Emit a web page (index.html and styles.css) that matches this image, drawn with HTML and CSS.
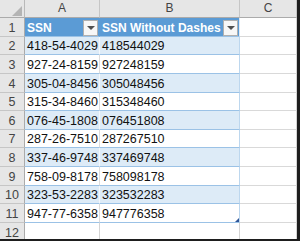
FILE: index.html
```html
<!DOCTYPE html>
<html>
<head>
<meta charset="utf-8">
<link rel="stylesheet" href="styles.css">
</head>
<body>
<div class="sheet">
  <div class="grid">
    <div class="corner"><span class="corner-tri"></span></div>
    <div class="colhead">A</div>
    <div class="colhead">B</div>
    <div class="colhead">C</div>

    <div class="rowhead">1</div>
    <div class="cell th a">SSN<span class="filter"><span class="arrow"></span></span></div>
    <div class="cell th b">SSN Without Dashes<span class="filter"><span class="arrow"></span></span></div>
    <div class="cell c"></div>

    <div class="rowhead">2</div>
    <div class="cell band a">418-54-4029</div>
    <div class="cell band b">418544029</div>
    <div class="cell c"></div>

    <div class="rowhead">3</div>
    <div class="cell plain a">927-24-8159</div>
    <div class="cell plain b">927248159</div>
    <div class="cell c"></div>

    <div class="rowhead">4</div>
    <div class="cell band a">305-04-8456</div>
    <div class="cell band b">305048456</div>
    <div class="cell c"></div>

    <div class="rowhead">5</div>
    <div class="cell plain a">315-34-8460</div>
    <div class="cell plain b">315348460</div>
    <div class="cell c"></div>

    <div class="rowhead">6</div>
    <div class="cell band a">076-45-1808</div>
    <div class="cell band b">076451808</div>
    <div class="cell c"></div>

    <div class="rowhead">7</div>
    <div class="cell plain a">287-26-7510</div>
    <div class="cell plain b">287267510</div>
    <div class="cell c"></div>

    <div class="rowhead">8</div>
    <div class="cell band a">337-46-9748</div>
    <div class="cell band b">337469748</div>
    <div class="cell c"></div>

    <div class="rowhead">9</div>
    <div class="cell plain a">758-09-8178</div>
    <div class="cell plain b">758098178</div>
    <div class="cell c"></div>

    <div class="rowhead">10</div>
    <div class="cell band a">323-53-2283</div>
    <div class="cell band b">323532283</div>
    <div class="cell c"></div>

    <div class="rowhead">11</div>
    <div class="cell plain a">947-77-6358</div>
    <div class="cell plain b last">947776358<span class="resize"></span></div>
    <div class="cell c"></div>

    <div class="rowhead">12</div>
    <div class="cell empty"></div>
    <div class="cell empty"></div>
    <div class="cell c"></div>
  </div>
</div>
</body>
</html>
```

FILE: styles.css
```css
html, body {
  margin: 0;
  padding: 0;
  background: #ffffff;
}

.sheet {
  width: 297px;
  height: 239px;
  border-right: 3px solid #1e1e1e;
  border-bottom: 2px solid #1e1e1e;
  overflow: hidden;
  font-family: "Liberation Sans", Arial, sans-serif;
}

.grid {
  display: grid;
  grid-template-columns: 25px 75px 140px 57px;
  grid-template-rows: 18px repeat(12, 18.64px);
}

.corner {
  position: relative;
  background: #e6e6e6;
  border-right: 1px solid #b9b9b9;
  border-bottom: 1px solid #ababab;
}

.corner-tri {
  position: absolute;
  right: 2px;
  bottom: 1px;
  width: 0;
  height: 0;
  border-left: 10px solid transparent;
  border-bottom: 10px solid #b4b4b4;
}

.colhead {
  background: #e6e6e6;
  border-right: 1px solid #c6c6c6;
  border-bottom: 1px solid #ababab;
  color: #444444;
  font-size: 12px;
  display: flex;
  align-items: flex-end;
  justify-content: center;
  padding-bottom: 2px;
}

.rowhead {
  background: #e6e6e6;
  border-right: 1px solid #ababab;
  border-bottom: 1px solid #c6c6c6;
  color: #444444;
  font-size: 12.5px;
  display: flex;
  align-items: flex-end;
  justify-content: center;
  line-height: 15px;
}

.cell {
  position: relative;
  display: flex;
  align-items: flex-end;
  padding-left: 2px;
  font-size: 12.5px;
  line-height: 15px;
  color: #111111;
  white-space: nowrap;
}

.th {
  background: #5b9bd5;
  color: #ffffff;
  font-weight: bold;
  font-size: 12px;
  border-bottom: 1px solid #9bc2e6;
}

.th.a {
  border-right: 1px solid #5b9bd5;
}

.th.b {
  border-right: 1px solid #deeaf6;
}

.band {
  background: #ddebf7;
  border-bottom: 1px solid #9bc2e6;
}

.plain {
  background: #ffffff;
  border-bottom: 1px solid #9bc2e6;
}

.band.a {
  border-right: 1px solid #f4f8fc;
}

.plain.a {
  border-right: 1px solid #dcdcdc;
}

.b {
  border-right: 1px solid #bdd7ee;
}

.c {
  border-right: 1px solid #d4d4d4;
  border-bottom: 1px solid #d9d9d9;
}

.empty {
  border-right: 1px solid #d4d4d4;
  border-bottom: 1px solid #d9d9d9;
}

.filter {
  position: absolute;
  right: 1px;
  top: 2px;
  width: 13px;
  height: 14px;
  background: #f7f7f7;
  border: 1px solid #b0b0b0;
  display: flex;
  align-items: center;
  justify-content: center;
}

.arrow {
  width: 0;
  height: 0;
  border-left: 4px solid transparent;
  border-right: 4px solid transparent;
  border-top: 4px solid #505050;
}

.resize {
  position: absolute;
  right: 0;
  bottom: 0;
  width: 0;
  height: 0;
  border-left: 4px solid transparent;
  border-bottom: 4px solid #2f5597;
}
```
